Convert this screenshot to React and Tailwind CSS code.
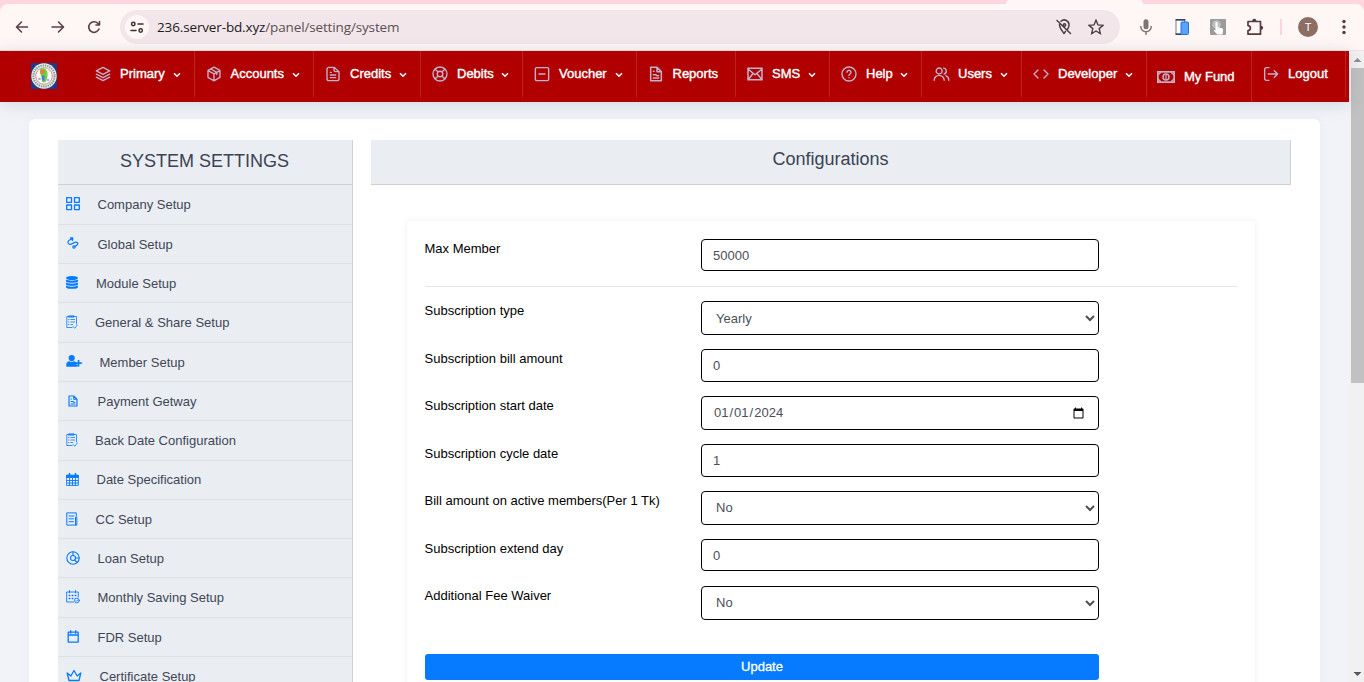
import React from "react";

const Svg = ({ children, className = "size-4", sw = 2.1, box = "0 0 24 24" }) => (
  <svg viewBox={box} className={className} fill="none" stroke="currentColor" strokeWidth={sw} strokeLinecap="round" strokeLinejoin="round">
    {children}
  </svg>
);

const Layers = () => (
  <Svg><path d="M12 2 22 7.3 12 12.6 2 7.3ZM2 12.3l10 5.3 10-5.3M2 16.8l10 5.2 10-5.2" /></Svg>
);
const Box = () => (
  <Svg><path d="M12 1.8 21 6.6v10.6L12 22.2 3 17.2V6.6ZM3 6.8l9 5 9-5M12 11.8v10.2M7.2 4.5l9 5v3.2" /></Svg>
);
const FileLines = () => (
  <Svg><path d="M13.5 2H6a3 3 0 0 0-3 3v14a3 3 0 0 0 3 3h12a3 3 0 0 0 3-3V8.5ZM13.5 2v4a2.5 2.5 0 0 0 2.5 2.5h5M8 9.5h1.5M8 13.5h8M8 17.5h8" /></Svg>
);
const Ring = () => (
  <Svg><circle cx="12" cy="12" r="10.5" /><circle cx="12" cy="12" r="4.2" /><path d="m4.8 4.8 4 4M19.2 4.8l-4 4M4.8 19.2l4-4M19.2 19.2l-4-4" /></Svg>
);
const Minus = () => (
  <Svg><rect x="2" y="2.5" width="20" height="19.5" rx="2" /><path d="M7.5 12h9" /></Svg>
);
const FileReport = ({ className = "size-4", sw = 2.3 }) => (
  <Svg className={className} sw={sw}><path d="M13.5 2H4v20h16V8.5ZM13.5 2v6.5H20M8 8h1M8 13h3.5l2 1.5H16M8 18h8" /></Svg>
);
const Mail = () => (
  <svg viewBox="0 0 16 14" className="h-[14px] w-4" fill="none" stroke="currentColor" strokeWidth="1.5"><path d="M1 1.3h14v11.4H1ZM1 2l7 5.800L15 2M1.500 12.300 6 6.500M14.500 12.300 10 6.500" /></svg>
);
const Help = () => (
  <Svg><circle cx="12" cy="12" r="10.5" /><path d="M9 9.500a3 3 0 1 1 4.500 2.600C12.500 12.700 12 13 12 14.200M12 17.500v.1" /></Svg>
);
const Users = () => (
  <Svg className="h-4 w-[17px]"><circle cx="8.5" cy="7.5" r="4.5" /><path d="M1 21.500a7.500 7.500 0 0 1 15 0M15 3.200a4.500 4.500 0 0 1 1 8.800M18.500 14.500a7.500 7.500 0 0 1 4.500 7" /></Svg>
);
const Code = () => (
  <Svg><path d="M7.500 6 1.500 12l6 6M16.500 6l6 6-6 6" /></Svg>
);
const Bill = () => (
  <svg viewBox="0 0 18 12" className="h-3 w-[18px]" fill="none" stroke="currentColor" strokeWidth="1.7">
    <rect x=".85" y=".85" width="16.3" height="10.3" />
    <circle cx="9" cy="6" r="3" strokeWidth="1.5" />
    <path d="M9 4v4" strokeWidth="1.3" />
    <path d="M1 4 4 1.200M17 4l-3-2.800M1 8l3 2.800M17 8l-3 2.800" strokeWidth="1.2" />
  </svg>
);
const Exit = () => (
  <Svg><path d="M9 2.500H5a2.500 2.500 0 0 0-2.500 2.500v14A2.500 2.500 0 0 0 5 21.500h4M8 12h14M17 7l5 5-5 5" /></Svg>
);
const Chevron = () => (
  <svg viewBox="0 0 8 6" className="h-1.5 w-2" fill="none" stroke="#fff" strokeWidth="1.6"><path d="M1 1.200 4 4.200l3-3" /></svg>
);

const nav = [
  { label: "Primary", icon: Layers, w: "w-[111px]", pad: "pl-[11px]", gap: "w-[25px]", caret: true },
  { label: "Accounts", icon: Box, w: "w-[119px]", pad: "pl-[10.5px]", gap: "w-[25px]", caret: true },
  { label: "Credits", icon: FileLines, w: "w-[107px]", pad: "pl-[11px]", gap: "w-[25px]", caret: true },
  { label: "Debits", icon: Ring, w: "w-[102px]", pad: "pl-[11px]", gap: "w-[25px]", caret: true },
  { label: "Voucher", icon: Minus, w: "w-[114px]", pad: "pl-[11px]", gap: "w-[25px]", caret: true },
  { label: "Reports", icon: FileReport, w: "w-[99px]", pad: "pl-[11px]", gap: "w-[24.5px]" },
  { label: "SMS", icon: Mail, w: "w-[94px]", pad: "pl-[11px]", gap: "w-[25px]", caret: true },
  { label: "Help", icon: Help, w: "w-[92px]", pad: "pl-[11px]", gap: "w-[25px]", caret: true },
  { label: "Users", icon: Users, w: "w-[100px]", pad: "pl-[11px]", gap: "w-[25px]", caret: true },
  { label: "Developer", icon: Code, w: "w-[125px]", pad: "pl-[11px]", gap: "w-[25px]", caret: true },
  { label: "My Fund", icon: Bill, w: "w-[105px]", pad: "pl-[10px]", gap: "w-[27px]", tall: true },
  { label: "Logout", icon: Exit, w: "w-[94px]", pad: "pl-[11px]", gap: "w-[25px]" },
];

const Grid4 = () => (
  <Svg className="size-[14px]" box="0 0 14 14" sw={1.3}><path d="M.7.7h4.800v4.600H.7ZM8.500.7h4.800v4.600H8.500ZM.7 8h4.800v4.600H.7ZM8.500 8h4.800v4.600H8.500Z" /></Svg>
);
const Wave = () => (
  <Svg className="size-[12px]" box="0 0 12 12" sw={1.2}><path d="M4.500 2.300C2.500 2.500.7 4 1 5.500c.5 2.500 3 2.300 4.500 1 2-1.500 4.800-2.200 5.300-.3.300 1.500-1 2.300-2.600 3" /><path d="m3.500.8 2.300.1-.3 2.400Z" fill="currentColor" /><circle cx="7" cy="10" r="1.2" /></Svg>
);
const Database = () => (
  <svg viewBox="0 0 12 13" className="h-[13px] w-3" fill="currentColor"><ellipse cx="6" cy="2" rx="6" ry="2" /><path d="M0 3.500c1.500 1.500 10.500 1.500 12 0v1.700c0 2-12 2-12 0ZM0 6.600c1.500 1.500 10.500 1.500 12 0v1.600c0 2-12 2-12 0ZM0 9.600c1.500 1.500 10.500 1.500 12 0v1.300c0 2.600-12 2.600-12 0Z" /></svg>
);
const ListCheck = () => (
  <Svg className="h-[14px] w-3" box="0 0 12 14" sw={0.8}><path d="M6 12.500H.8V1.500h9.700v7.500M3 .8h5v1.400H3ZM2.500 4.500h.5M4.800 4.500H8.700M2.500 7h.5M4.800 7h3.900M2.500 9.500h.5M4.800 9.500h2M7 11.500 8.700 13.300l2.600-3.300" /></Svg>
);
const UserPlus = () => (
  <svg viewBox="0 0 16 12" className="h-3 w-4" fill="currentColor"><circle cx="5.7" cy="3.1" r="3.1" /><path d="M.5 11.700c-1-3.700 1-5.500 2.800-5.500 1.500 1 3.300 1 4.800 0 .7 0 1.300.2 1.700.7v2.700h1.700v2.100ZM11.700 5h1.700v2.300h2.400V9h-2.400v2.400h-1.700V9H9.500V7.300h2.200Z" /></svg>
);
const CalGrid = () => (
  <Svg className="size-[13px]" box="0 0 13 13" sw={0.9}><path d="M.7 2.500h11.600v9.900H.7ZM.7 7.500h11.600M.7 10h11.600M3.600 5v7.400M6.500 5v7.400M9.400 5v7.400" /><path d="M.7 2.200h11.600v2.300H.7Z" fill="currentColor" /><path d="M3.500.7v2M9.500.7v2" strokeWidth="1.6" /></Svg>
);
const Journal = () => (
  <Svg className="h-[14px] w-3" box="0 0 12 14" sw={1}><path d="M10.300 4V.9H.8v12.200h8.500M3 4h5M3 6.800h4.500M3 9.700h4.500M9.500 5.500v7.600h1.300V5.500Z" /></Svg>
);
const Target = () => (
  <Svg className="size-[14px]" box="0 0 14 14" sw={1.1}><circle cx="7" cy="7" r="6.2" /><circle cx="7" cy="7" r="2.5" /><path d="M7 .8v3.700M9.500 7h3.700M8.500 9l2.800 2.500" /></Svg>
);
const CalDots = () => (
  <Svg className="size-[14px]" box="0 0 14 14" sw={0.9}><path d="M7.500 12H.7V2h11.600v5M3.500.6v2.200M9.500.6v2.200" /><path d="M3.200 5.500h.7M6.200 5.500h.7M9.200 5.500h.7M3.200 8.500h.7M6.200 8.500h.7" strokeWidth="1.3" /><circle cx="10.8" cy="10.5" r="2.4" /><path d="m9.800 10.500.8.8 1.300-1.500" strokeWidth=".7" /></Svg>
);
const Cal = () => (
  <Svg className="size-[13px]" box="0 0 13 13" sw={1.3}><path d="M1.200 2.200h10v9.900h-10ZM1.200 5h10M3.700.7v2.500M8.700.7v2.500" /></Svg>
);
const Crown = () => (
  <Svg className="size-[16px]" box="0 0 16 16" sw={1.3}><path d="M3 12.500 1.200 5l3.600 3L8 2.500 11.200 8l3.600-3L13 12.500ZM3 14.800h10" /></Svg>
);
const FileSmall = () => <FileReport className="size-[12px]" sw={2.3} />;

const side = [
  ["Company Setup", Grid4, "pl-[8px]", "w-[31.5px]"],
  ["Global Setup", Wave, "pl-[9px]", "w-[30.5px]"],
  ["Module Setup", Database, "pl-[8px]", "w-[30px]"],
  ["General & Share Setup", ListCheck, "pl-[8px]", "w-[29px]"],
  ["Member Setup", UserPlus, "pl-[8px]", "w-[33.5px]"],
  ["Payment Getway", FileSmall, "pl-[9px]", "w-[30.5px]"],
  ["Back Date Configuration", ListCheck, "pl-[8px]", "w-[29px]"],
  ["Date Specification", CalGrid, "pl-[8px]", "w-[30.5px]"],
  ["CC Setup", Journal, "pl-[8px]", "w-[29.5px]"],
  ["Loan Setup", Target, "pl-[8px]", "w-[31.5px]"],
  ["Monthly Saving Setup", CalDots, "pl-[8px]", "w-[31.5px]"],
  ["FDR Setup", Cal, "pl-[9px]", "w-[30.5px]"],
  ["Certificate Setup", Crown, "pl-[8px]", "w-[33.5px]"],
];

const rows = [
  { label: "Subscription type", kind: "select", value: "Yearly", row: "h-[48px]", box: "h-[34px]" },
  { label: "Subscription bill amount", kind: "text", value: "0", row: "h-[47px]", box: "h-[33px]" },
  { label: "Subscription start date", kind: "date", value: "2024-01-01", row: "h-[48px]", box: "h-[34px]" },
  { label: "Subscription cycle date", kind: "text", value: "1", row: "h-[47px]", box: "h-[33px]" },
  { label: "Bill amount on active members(Per 1 Tk)", kind: "select", value: "No", row: "h-[48px]", box: "h-[34px] pb-0.5" },
  { label: "Subscription extend day", kind: "text", value: "0", row: "h-[47px]", box: "h-[32px]" },
  { label: "Additional Fee Waiver", kind: "select", value: "No", row: "h-[48px]", box: "h-[34px] pb-0.5" },
];

function Field({ kind, value, box }) {
  const base = "w-[398px] rounded-[4px] border border-black bg-white text-[13px] text-[#495057] ";
  if (kind === "select")
    return (
      <select defaultValue={value} className={base + "pr-[4px] pl-[10px] " + box}>
        <option>{value}</option>
      </select>
    );
  if (kind === "date") return <input type="date" defaultValue={value} className={base + "pr-[11px] pl-[11px] " + box} />;
  return <input type="text" defaultValue={value} className={base + "px-[11px] " + box} />;
}

function Row({ label, row, ...field }) {
  return (
    <div className={"flex items-start " + row}>
      <label className="-ml-[0.5px] w-[276.5px] shrink-0 text-[13px] leading-[19px] text-black">{label}</label>
      <Field {...field} />
    </div>
  );
}

function Browser() {
  return (
    <div className="h-[51px] shrink-0 bg-[#ffd6de]">
      <div className="flex h-1 justify-end pr-[221px]"><div className="w-[137px] rounded-t-lg bg-[#fff7f6]" /></div>
      <div className="flex h-[47px] items-center rounded-t-lg border-b border-[#f3dfe3] bg-[#fff7f6] pl-[14px] text-[#5a3f43]">
        <Svg className="size-4" box="0 0 16 16" sw={1.6}><path d="M13.500 8H3M7.500 3 2.500 8l5 5" /></Svg>
        <Svg className="ml-5 size-4" box="0 0 16 16" sw={1.6}><path d="M2 8h11M8.500 3l5 5-5 5" /></Svg>
        <Svg className="ml-5 size-4" box="0 0 16 16" sw={1.6}><path d="M13 10a5.300 5.300 0 1 1-1-5.500L13.500 6M13.500 2.500V6H10" /></Svg>
        <div className="ml-[18px] flex h-[34px] w-[1000px] items-center rounded-full bg-[#f2e6ea] pl-[5px]">
          <div className="flex size-6 items-center justify-center rounded-full bg-[#fff7f6] text-[#3b2f31]">
            <Svg className="size-[14px]" box="0 0 14 14" sw={1.5}><circle cx="3.3" cy="4" r="1.7" /><path d="M8 4h5M1 10.500h5" /><circle cx="10.7" cy="10.5" r="1.7" /></Svg>
          </div>
          <div className="ml-2 w-[899px] font-['Open_Sans',sans-serif] text-[13.5px] tracking-[-0.14px] text-[#211a1c]">
            236.server-bd.xyz<span className="text-[#5c4f53]">/panel/setting/system</span>
          </div>
          <Svg className="size-4 text-[#4a3f42]" box="0 0 16 16" sw={1.5}><path d="M1 1.500l13.500 13M5 2.200a4.800 4.800 0 0 1 8 4c0 1.500-.6 2.800-1.500 4M3.500 5.500C3.500 9 6 11.500 8 14.500l1.500-2.200" /><circle cx="8.5" cy="6" r="1.2" /></Svg>
          <Svg className="ml-4 size-4 text-[#4a3f42]" box="0 0 16 16" sw={1.4}><path d="m8 1.200 2 4.700 5 .5-3.800 3.200 1.100 5L8 12l-4.300 2.600 1.100-5L1 6.400 6 5.900Z" strokeLinejoin="miter" /></Svg>
        </div>
        <Svg className="ml-[18px] size-4 text-[#7b7576]" box="0 0 16 16" sw={1.5}><rect x="5.5" y=".3" width="5" height="10" rx="2.5" fill="currentColor" stroke="none" /><path d="M2.800 7.500a5.200 5.200 0 0 0 10.400 0M8 12.800v2.500" /></Svg>
        <svg viewBox="0 0 16 18" className="ml-5 h-[18px] w-4"><path d="M2 2h8.500v14H2Z" fill="#fff" stroke="#6b7f99" /><path d="M1.500 1h10v1.500h-10ZM1.500 15.500h6V17h-6Z" fill="#34445c" /><rect x="7" y="4" width="7.5" height="12.5" rx="1" fill="#5aa2ff" stroke="#2b6fd0" /></svg>
        <svg viewBox="0 0 16 16" className="ml-5 size-4"><rect width="16" height="16" rx="1" fill="#9b9b9b" /><circle cx="6.5" cy="5.5" r="4.3" fill="#c0c0c0" /><path d="M5.500 4c0-1.200 2-1.200 2 0v4.200l4.300 1c1.200.3 1.500 1 1.300 2l-.6 4.300H7.300L3.600 11.500c.5-.8 1.200-.6 1.900 0Z" fill="#fff" /></svg>
        <Svg className="ml-5 size-[18px] text-[#5a3a40]" box="0 0 18 18" sw={1.7}><path d="M2 3.500h12.500v12.700H2v-3.600c3.200 0 3.200-5 0-5Z" /><path d="M7 3a1.300 1.300 0 0 1 2.600 0M15 8.500a1.300 1.300 0 0 1 0 2.600" fill="currentColor" /></Svg>
        <div className="ml-4 h-4 w-0.5 bg-[#ffd3dc]" />
        <div className="ml-4 flex size-5 items-center justify-center rounded-full bg-[#8d6e63] text-[11px] text-white">T</div>
        <svg viewBox="0 0 4 16" className="ml-6 h-4 w-1" fill="#5a3a40"><circle cx="2" cy="2.5" r="1.7" /><circle cx="2" cy="8" r="1.7" /><circle cx="2" cy="13.5" r="1.7" /></svg>
      </div>
    </div>
  );
}

const Logo = () => (
  <svg viewBox="0 0 26 26" className="mt-[12px] ml-[31px] size-[26px] shrink-0">
    <rect width="26" height="26" fill="#1e3a8c" />
    <circle cx="13" cy="13" r="12.7" fill="#e9efdd" />
    <circle cx="13" cy="13" r="10.6" fill="none" stroke="#7396a0" strokeWidth="2" strokeDasharray="1.3 1" />
    <circle cx="13" cy="13" r="8.3" fill="#fff" stroke="#d3587c" strokeWidth=".7" />
    <path d="M10 5.500c4-1.500 7.500 2 6.500 7.500s-2 6.500-4 6.500-1.500-3-2.500-6.500-2-6 0-7.500Z" fill="#66d43a" />
    <circle cx="11.5" cy="9" r="2.3" fill="#f07a35" />
    <path d="M11 12.500h2.500v5H11Z" fill="#4a78e0" />
    <circle cx="8.5" cy="16" r="1.3" fill="#a9a2e8" />
    <circle cx="17" cy="17" r="1.3" fill="#9fb2ef" />
  </svg>
);

export default function App() {
  return (
    <div className="flex h-[682px] w-[1364px] flex-col overflow-hidden font-['Liberation_Sans',Arial,sans-serif]">
      <Browser />
      <div className="flex min-h-0 flex-1 bg-[#f2f3f8]">
        <div className="flex w-[1349px] flex-col">
          <header className="z-10 flex h-[51px] shrink-0 bg-[#b00000] shadow-[0_2px_16px_rgba(60,80,110,0.18)]">
            <Logo />
            <nav className="ml-[27px] flex">
              {nav.map(({ label, icon: Icon, w, pad, gap, caret, tall }) => (
                <div key={label} className={"flex items-center border-r border-[#bd2222] text-[#c3b0cb] " + w + " " + pad + (tall ? " h-[51px]" : " h-[46px]")}>
                  <span className={"shrink-0 " + gap}><Icon /></span>
                  <span className="text-[13px] font-medium whitespace-nowrap text-white [-webkit-text-stroke:0.4px_#fff]">{label}</span>
                  {caret && <span className="mt-0.5 ml-auto pr-[13px]"><Chevron /></span>}
                </div>
              ))}
            </nav>
          </header>
          <main className="mt-[17px] ml-[29px] flex h-[700px] w-[1291px] gap-[18px] rounded-md bg-white pt-[21px] pl-[29px] shadow-[0_0_10px_rgba(80,90,120,0.05)]">
            <aside className="w-[295px] shrink-0 border-r border-[#cdd1d6] bg-[#eaedf2]">
              <h2 className="mb-[0.5px] h-[45px] border-b border-[#cdd1d6] pr-px text-center text-[18px] leading-[42px] text-[#3b4253]">SYSTEM SETTINGS</h2>
              {side.map(([label, Icon, pad, w]) => (
                <div key={label} className={"flex h-[39.3px] items-center border-b border-[#dde1e6] pt-px text-[13px] text-[#3f4756] " + pad}>
                  <span className={"-mt-[2px] shrink-0 text-[#077bff] " + w}><Icon /></span>
                  {label}
                </div>
              ))}
            </aside>
            <section className="w-[920px]">
              <h2 className="h-[45px] border-r border-b border-[#cdd1d6] bg-[#eaedf2] text-center text-[18px] leading-[38px] text-[#3b4253]">Configurations</h2>
              <form className="mt-9 ml-9 h-[520px] w-[848px] rounded bg-white px-[18px] pt-[18px] shadow-[0_0_6px_rgba(0,0,0,0.07)]">
                <Row label="Max Member" kind="text" value="50000" row="h-[47px]" box="h-[32px]" />
                <div className="mb-[14px] h-px w-[812px] bg-[#e4e5e7]" />
                {rows.map((r) => <Row key={r.label} {...r} />)}
                <button type="button" className="mt-5 h-[26px] w-[674px] rounded-[3px] bg-[#067bff] text-[13px] text-white [-webkit-text-stroke:0.3px_#fff]">Update</button>
              </form>
            </section>
          </main>
        </div>
        <div className="flex w-[15px] flex-col items-end bg-[#f1f1f1]">
          <svg viewBox="0 0 13 17" className="h-[17px] w-[13px]"><path d="M2.500 11 6.500 7l4 4Z" fill="#8f8f8f" /></svg>
          <div className="h-[315px] w-[13px] bg-[#c1c1c1]" />
          <svg viewBox="0 0 13 17" className="mt-auto h-[17px] w-[13px]"><path d="m2.500 7 4 4 4-4Z" fill="#555" /></svg>
        </div>
      </div>
    </div>
  );
}
